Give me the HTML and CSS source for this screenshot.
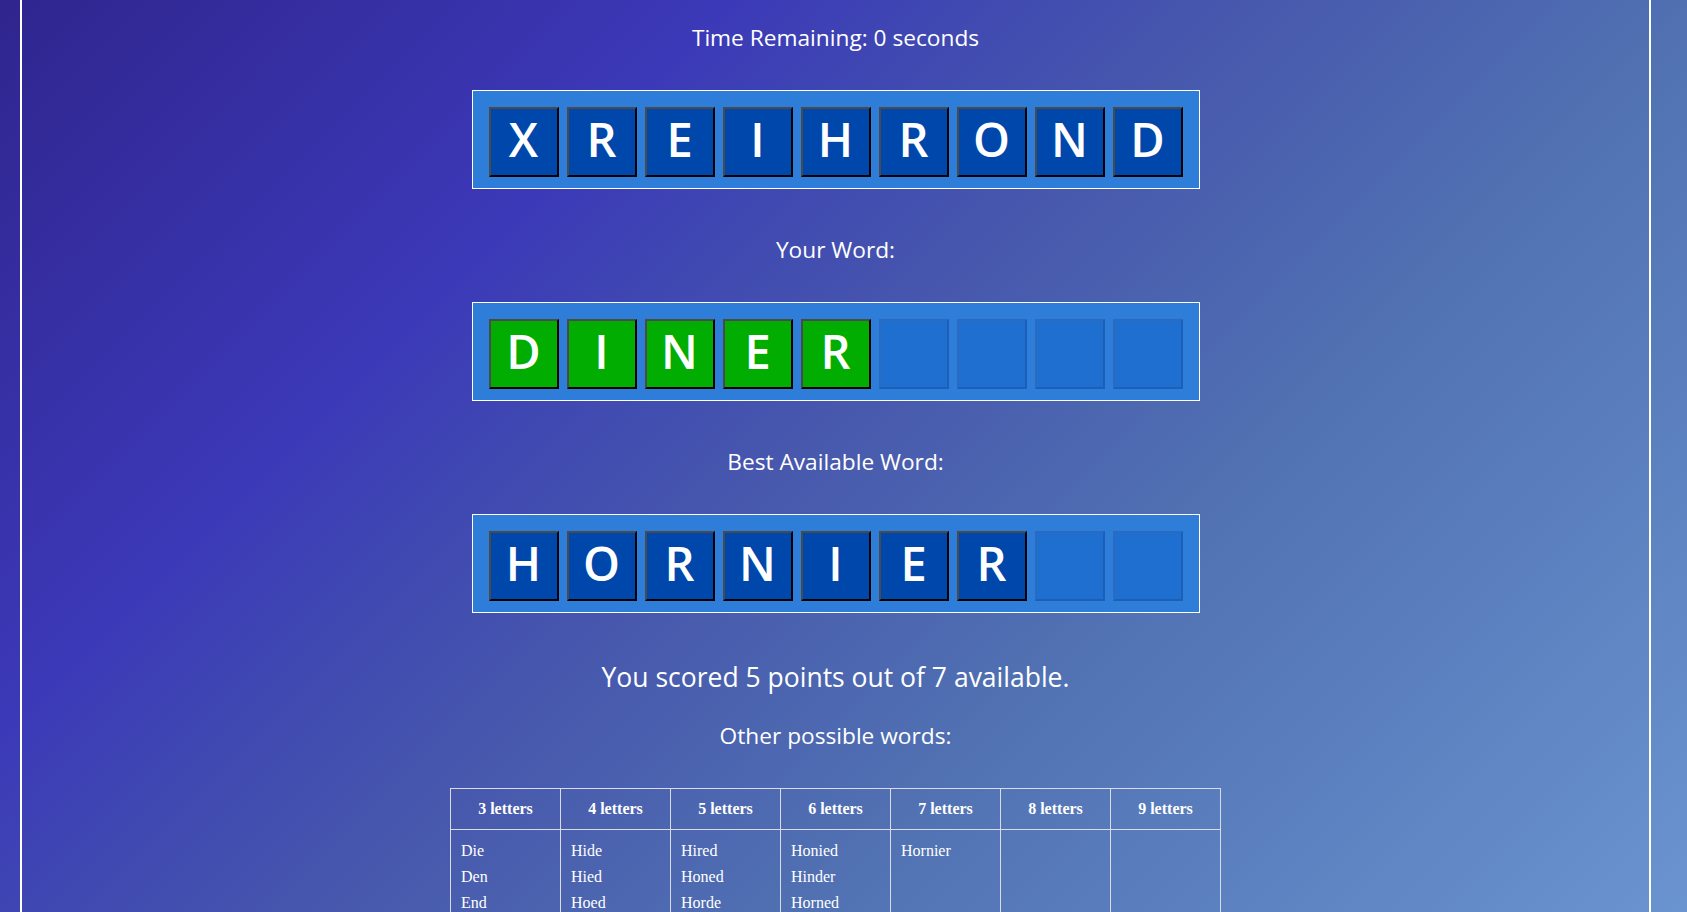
FILE: index.html
```html
<!DOCTYPE html>
<html lang="en">
<head>
<meta charset="utf-8">
<title>Word Game</title>
<link rel="stylesheet" href="styles.css">
</head>
<body>
<div class="page">
  <main class="board">
    <p class="timer">Time Remaining: 0 seconds</p>
    <div class="rack">
      <span class="tile">X</span><span class="tile">R</span><span class="tile">E</span><span class="tile">I</span><span class="tile">H</span><span class="tile">R</span><span class="tile">O</span><span class="tile">N</span><span class="tile">D</span>
    </div>
    <p class="label">Your Word:</p>
    <div class="rack">
      <span class="tile tile-good">D</span><span class="tile tile-good">I</span><span class="tile tile-good">N</span><span class="tile tile-good">E</span><span class="tile tile-good">R</span><span class="tile tile-empty"></span><span class="tile tile-empty"></span><span class="tile tile-empty"></span><span class="tile tile-empty"></span>
    </div>
    <p class="label">Best Available Word:</p>
    <div class="rack">
      <span class="tile">H</span><span class="tile">O</span><span class="tile">R</span><span class="tile">N</span><span class="tile">I</span><span class="tile">E</span><span class="tile">R</span><span class="tile tile-empty"></span><span class="tile tile-empty"></span>
    </div>
    <p class="score">You scored 5 points out of 7 available.</p>
    <p class="label label-words">Other possible words:</p>
    <table class="words">
      <thead>
        <tr><th>3 letters</th><th>4 letters</th><th>5 letters</th><th>6 letters</th><th>7 letters</th><th>8 letters</th><th>9 letters</th></tr>
      </thead>
      <tbody>
        <tr>
          <td><div>Die</div><div>Den</div><div>End</div></td>
          <td><div>Hide</div><div>Hied</div><div>Hoed</div></td>
          <td><div>Hired</div><div>Honed</div><div>Horde</div></td>
          <td><div>Honied</div><div>Hinder</div><div>Horned</div></td>
          <td><div>Hornier</div></td>
          <td></td>
          <td></td>
        </tr>
      </tbody>
    </table>
  </main>
</div>
</body>
</html>
```
FILE: styles.css
```css
html, body {
  margin: 0;
  padding: 0;
}

.page {
  height: 100vh;
  overflow: hidden;
  background: linear-gradient(135deg, #30258e 0%, #3c39b8 28%, #3f47b2 36%, #4758ad 48%, #5070b2 65%, #6a94cf 100%);
  font-family: "Open Sans", "Noto Sans", sans-serif;
  color: #ffffff;
}

.board {
  margin: 0 36px 0 20px;
  min-height: 100%;
  border-left: 2px solid #ffffff;
  border-right: 2px solid #ffffff;
  display: flex;
  flex-direction: column;
  align-items: center;
  text-align: center;
}

.timer,
.label {
  margin: 45px 0 36px;
  font-size: 22.7px;
  line-height: 32px;
}

.timer {
  margin-top: 22px;
}

.score {
  margin: 46px 0 24px;
  font-size: 26.5px;
  line-height: 36px;
}

.label-words {
  margin-top: 0;
  margin-bottom: 36px;
  padding-top: 1px;
}

.rack {
  box-sizing: border-box;
  width: 728px;
  height: 99px;
  padding: 16px 16px 11px;
  border: 1px solid #ffffff;
  background: #2e7dd9;
  display: flex;
  gap: 8px;
}

.tile {
  box-sizing: border-box;
  width: 70px;
  height: 70px;
  border: 2px solid;
  border-color: #4a4a4a #000000 #000000 #4a4a4a;
  background: #0047ab;
  display: flex;
  align-items: center;
  justify-content: center;
  font-size: 47px;
  font-weight: 600;
  line-height: 1;
  padding-bottom: 6px;
}

.tile-good {
  background: #00ad00;
}

.tile-empty {
  background: #1f6fd1;
  border-color: #2a6bc0 #1b5fb8 #1b5fb8 #2a6bc0;
}

.words {
  border-collapse: collapse;
  table-layout: fixed;
  width: 771px;
  font-family: "Liberation Serif", "Times New Roman", serif;
  font-size: 16px;
  color: #ffffff;
}

.words th,
.words td {
  border: 1px solid #d9dbe6;
}

.words th {
  height: 40px;
  padding: 0;
  line-height: 20px;
  font-weight: bold;
  vertical-align: middle;
}

.words td {
  padding: 8px 10px;
  vertical-align: top;
  text-align: left;
  line-height: 26px;
}
```
